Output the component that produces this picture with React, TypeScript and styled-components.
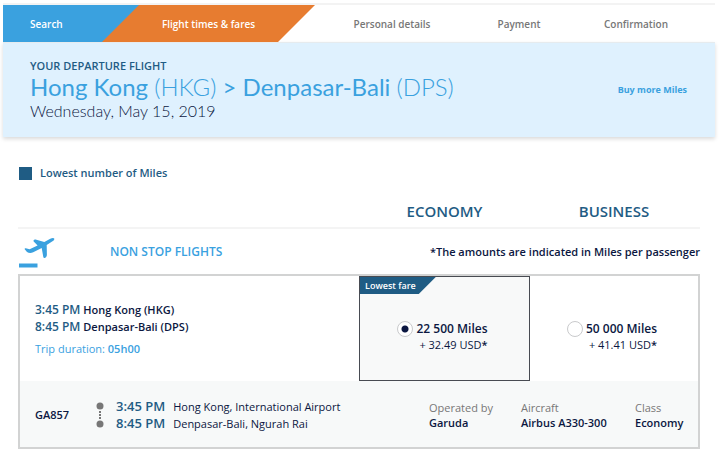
import React from "react";
import styled, { createGlobalStyle } from "styled-components";

const GlobalStyle = createGlobalStyle`
  *, *::before, *::after { box-sizing: border-box; }
  body {
    margin: 0;
    background: #fff;
    color: #0b1741;
    font-family: "Open Sans", "Noto Sans", sans-serif;
    font-size: 11px;
    line-height: 16px;
  }
  h1, h2, h3, p, ol, dl, dd { margin: 0; padding: 0; }
  ol { list-style: none; }
`;

const blue = "#3aa1df";
const navy = "#1f5c84";

const Page = styled.main`
  padding: 3px 4px 2px 3px;
`;

const Steps = styled.ol`
  display: grid;
  grid-template-columns: 136fr 176fr 154fr 100fr 134fr 12fr;
  border-top: 2px solid #f3f3f3;
`;

const Step = styled.li<{ $kind?: "done" | "current" }>`
  display: flex;
  align-items: center;
  justify-content: ${(p) => (p.$kind === "done" ? "flex-start" : "center")};
  height: 37px;
  padding-left: ${(p) => (p.$kind === "done" ? "27px" : "0")};
  margin-left: ${(p) => (p.$kind === "current" ? "-37px" : "0")};
  font-size: 10px;
  font-weight: 600;
  color: ${(p) => (p.$kind ? "#fff" : "#777")};
  background: ${(p) => (p.$kind === "done" ? blue : p.$kind === "current" ? "#e77c30" : "none")};
  clip-path: ${(p) =>
    p.$kind === "current" ? "polygon(37px 0, 100% 0, calc(100% - 37px) 100%, 0 100%)" : "none"};
`;

const Banner = styled.header`
  display: flex;
  justify-content: space-between;
  align-items: center;
  padding: 15px 28px 16px 27px;
  border-top: 1px solid #e6ebee;
  background: #dff1fe;
  box-shadow: 0 2px 4px rgba(0, 0, 0, 0.15);
`;

const Eyebrow = styled.p`
  color: ${navy};
  font-weight: 600;
  line-height: 15px;
`;

const Route = styled.h1`
  color: ${blue};
  font-family: Lato, sans-serif;
  font-size: 24px;
  font-weight: 400;
  line-height: 28px;
`;

const Code = styled.span`
  font-weight: 300;
`;

const FlightDate = styled.p`
  font-family: Lato, sans-serif;
  font-size: 16px;
  font-weight: 300;
  line-height: 20px;
`;

const MilesLink = styled.a`
  color: ${blue};
  font-size: 9px;
  font-weight: 700;
  text-decoration: none;
`;

const Results = styled.section`
  padding: 28px 15px 0;
`;

const Legend = styled.p`
  display: flex;
  align-items: center;
  gap: 8px;
  padding-left: 1px;
  color: ${navy};
  font-weight: 600;
  &::before {
    content: "";
    width: 13px;
    height: 13px;
    background: ${navy};
  }
`;

const FareColumns = styled.div`
  display: grid;
  grid-template-columns: 339fr 171fr 168fr;
`;

const CabinHeadings = styled(FareColumns)`
  padding: 19px 2px 5px;
  border-bottom: 2px solid #f4f4f4;
`;

const Cabin = styled.h2`
  color: ${navy};
  font-size: 15px;
  line-height: 22px;
  font-weight: 600;
  text-align: center;
  &:first-child { grid-column-start: 2; }
`;

const GroupHeading = styled.div`
  display: flex;
  align-items: center;
  height: 45px;
`;

const PlaneIcon = styled.svg`
  width: 38px;
  height: 32px;
  flex: none;
`;

const GroupTitle = styled.h3`
  margin-left: 54px;
  color: ${blue};
  font-size: 12px;
  font-weight: 600;
`;

const Note = styled.p`
  margin-left: auto;
  font-weight: 600;
`;

const Card = styled.article`
  border: 2px solid #d2d3d3;
`;

const Summary = styled.div`
  padding: 25px 15px 24px;
`;

const Leg = styled.p`
  line-height: 17px;
  font-weight: 600;
`;

const Time = styled.span<{ $large?: boolean }>`
  color: ${navy};
  font-size: ${(p) => (p.$large ? "13px" : "12px")};
  font-weight: 600;
`;

const Duration = styled.p`
  margin-top: 6px;
  color: ${blue};
`;

const Strong = styled.span`
  font-weight: 600;
`;

const FareOption = styled.label<{ $selected?: boolean }>`
  position: relative;
  display: flex;
  align-items: center;
  justify-content: center;
  gap: 3px;
  padding: 17px 4px 0 0;
  border: 1px solid ${(p) => (p.$selected ? "#484b52" : "transparent")};
  background: ${(p) => (p.$selected ? "#f8f9f9" : "none")};
`;

const Tag = styled.span`
  position: absolute;
  top: 0;
  left: 0;
  padding: 0 20px 0 5px;
  background: ${navy};
  color: #fff;
  font-size: 9px;
  line-height: 17px;
  font-weight: 600;
  clip-path: polygon(0 0, 100% 0, calc(100% - 17px) 100%, 0 100%);
`;

const Radio = styled.input`
  appearance: none;
  align-self: flex-start;
  width: 16px;
  height: 16px;
  margin: 27px 0 0;
  border: 1px solid #c9cacc;
  border-radius: 50%;
  background: #fff;
  &:checked { background: radial-gradient(circle, #0b1741 0 3px, #fff 4px); }
`;

const Price = styled.span`
  text-align: right;
`;

const Miles = styled.span`
  display: block;
  font-size: 12px;
  font-weight: 600;
`;

const Cash = styled.span`
  display: block;
`;

const Details = styled.div`
  display: grid;
  grid-template-columns: 61fr 333fr 92fr 114fr 63fr;
  align-items: center;
  padding: 17px 0 15px 15px;
  background: #f7f9f9;
`;

const FlightNumber = styled.p`
  font-weight: 600;
`;

const Itinerary = styled.div`
  display: flex;
  align-items: center;
`;

const Track = styled.svg`
  width: 8px;
  height: 26px;
  margin-right: 12px;
`;

const Stop = styled.p`
  display: flex;
  align-items: center;
  gap: 8px;
  line-height: 17px;
`;

const Fact = styled.dl`
  line-height: 15px;
`;

const FactName = styled.dt`
  color: #777;
`;

const FactValue = styled.dd`
  font-weight: 600;
`;

const fares = [
  { id: "economy", miles: "22 500 Miles", cash: "+ 32.49 USD", lowest: true },
  { id: "business", miles: "50 000 Miles", cash: "+ 41.41 USD", lowest: false },
];

const facts = [
  ["Operated by", "Garuda"],
  ["Aircraft", "Airbus A330-300"],
  ["Class", "Economy"],
];

export default function App() {
  const [fare, setFare] = React.useState("economy");
  return (
    <>
      <GlobalStyle />
      <Page>
        <Steps>
          <Step $kind="done">Search</Step>
          <Step $kind="current" aria-current="step">Flight times &amp; fares</Step>
          <Step>Personal details</Step>
          <Step>Payment</Step>
          <Step>Confirmation</Step>
        </Steps>
        <Banner>
          <div>
            <Eyebrow>YOUR DEPARTURE FLIGHT</Eyebrow>
            <Route>
              Hong Kong <Code>(HKG)</Code> &gt; Denpasar-Bali <Code>(DPS)</Code>
            </Route>
            <FlightDate>Wednesday, May 15, 2019</FlightDate>
          </div>
          <MilesLink href="#miles">Buy more Miles</MilesLink>
        </Banner>
        <Results>
          <Legend>Lowest number of Miles</Legend>
          <CabinHeadings>
            <Cabin>ECONOMY</Cabin>
            <Cabin>BUSINESS</Cabin>
          </CabinHeadings>
          <GroupHeading>
            <PlaneIcon viewBox="0 0 38 32" fill={blue} aria-hidden="true">
              <path d="M6.7 13.2C6.4 12.5 7 12.1 7.8 12.3L11.6 13.3L19.6 9.4L15.7 5.4C15.2 4.8 15.5 4 16.3 3.7C17 3.4 17.7 3.5 18.4 3.8L26.3 6.1L32.3 2.7C33.8 1.9 35.8 1.6 36.2 2.5C36.7 3.5 35.5 4.8 34.1 5.6L28.7 9L28.9 18.8C28.9 20.3 28.1 21.5 26.8 22C26 22.3 25.5 21.8 25.3 21L23.7 12L15.2 16.3C12.8 17.3 10.7 17.1 9 15.9Z" />
              <path d="M1 27.5H19.5V31.5H1Z" />
            </PlaneIcon>
            <GroupTitle>NON STOP FLIGHTS</GroupTitle>
            <Note>*The amounts are indicated in Miles per passenger</Note>
          </GroupHeading>
          <Card>
            <FareColumns>
              <Summary>
                <Leg><Time>3:45 PM</Time> Hong Kong (HKG)</Leg>
                <Leg><Time>8:45 PM</Time> Denpasar-Bali (DPS)</Leg>
                <Duration>Trip duration: <Strong>05h00</Strong></Duration>
              </Summary>
              {fares.map((f) => (
                <FareOption key={f.id} $selected={fare === f.id}>
                  {f.lowest && <Tag>Lowest fare</Tag>}
                  <Radio
                    type="radio"
                    name="fare"
                    checked={fare === f.id}
                    onChange={() => setFare(f.id)}
                  />
                  <Price>
                    <Miles>{f.miles}</Miles>
                    <Cash>{f.cash}<Strong>*</Strong></Cash>
                  </Price>
                </FareOption>
              ))}
            </FareColumns>
            <Details>
              <FlightNumber>GA857</FlightNumber>
              <Itinerary>
                <Track viewBox="0 0 8 26" fill="#777" aria-hidden="true">
                  <circle cx="4" cy="4" r="3.5" />
                  <circle cx="4" cy="22" r="3.5" />
                  <path d="M3 9h2v2H3zM3 12h2v2H3zM3 15h2v2H3z" />
                </Track>
                <div>
                  <Stop><Time $large>3:45 PM</Time>Hong Kong, International Airport</Stop>
                  <Stop><Time $large>8:45 PM</Time>Denpasar-Bali, Ngurah Rai</Stop>
                </div>
              </Itinerary>
              {facts.map(([name, value]) => (
                <Fact key={name}>
                  <FactName>{name}</FactName>
                  <FactValue>{value}</FactValue>
                </Fact>
              ))}
            </Details>
          </Card>
        </Results>
      </Page>
    </>
  );
}
